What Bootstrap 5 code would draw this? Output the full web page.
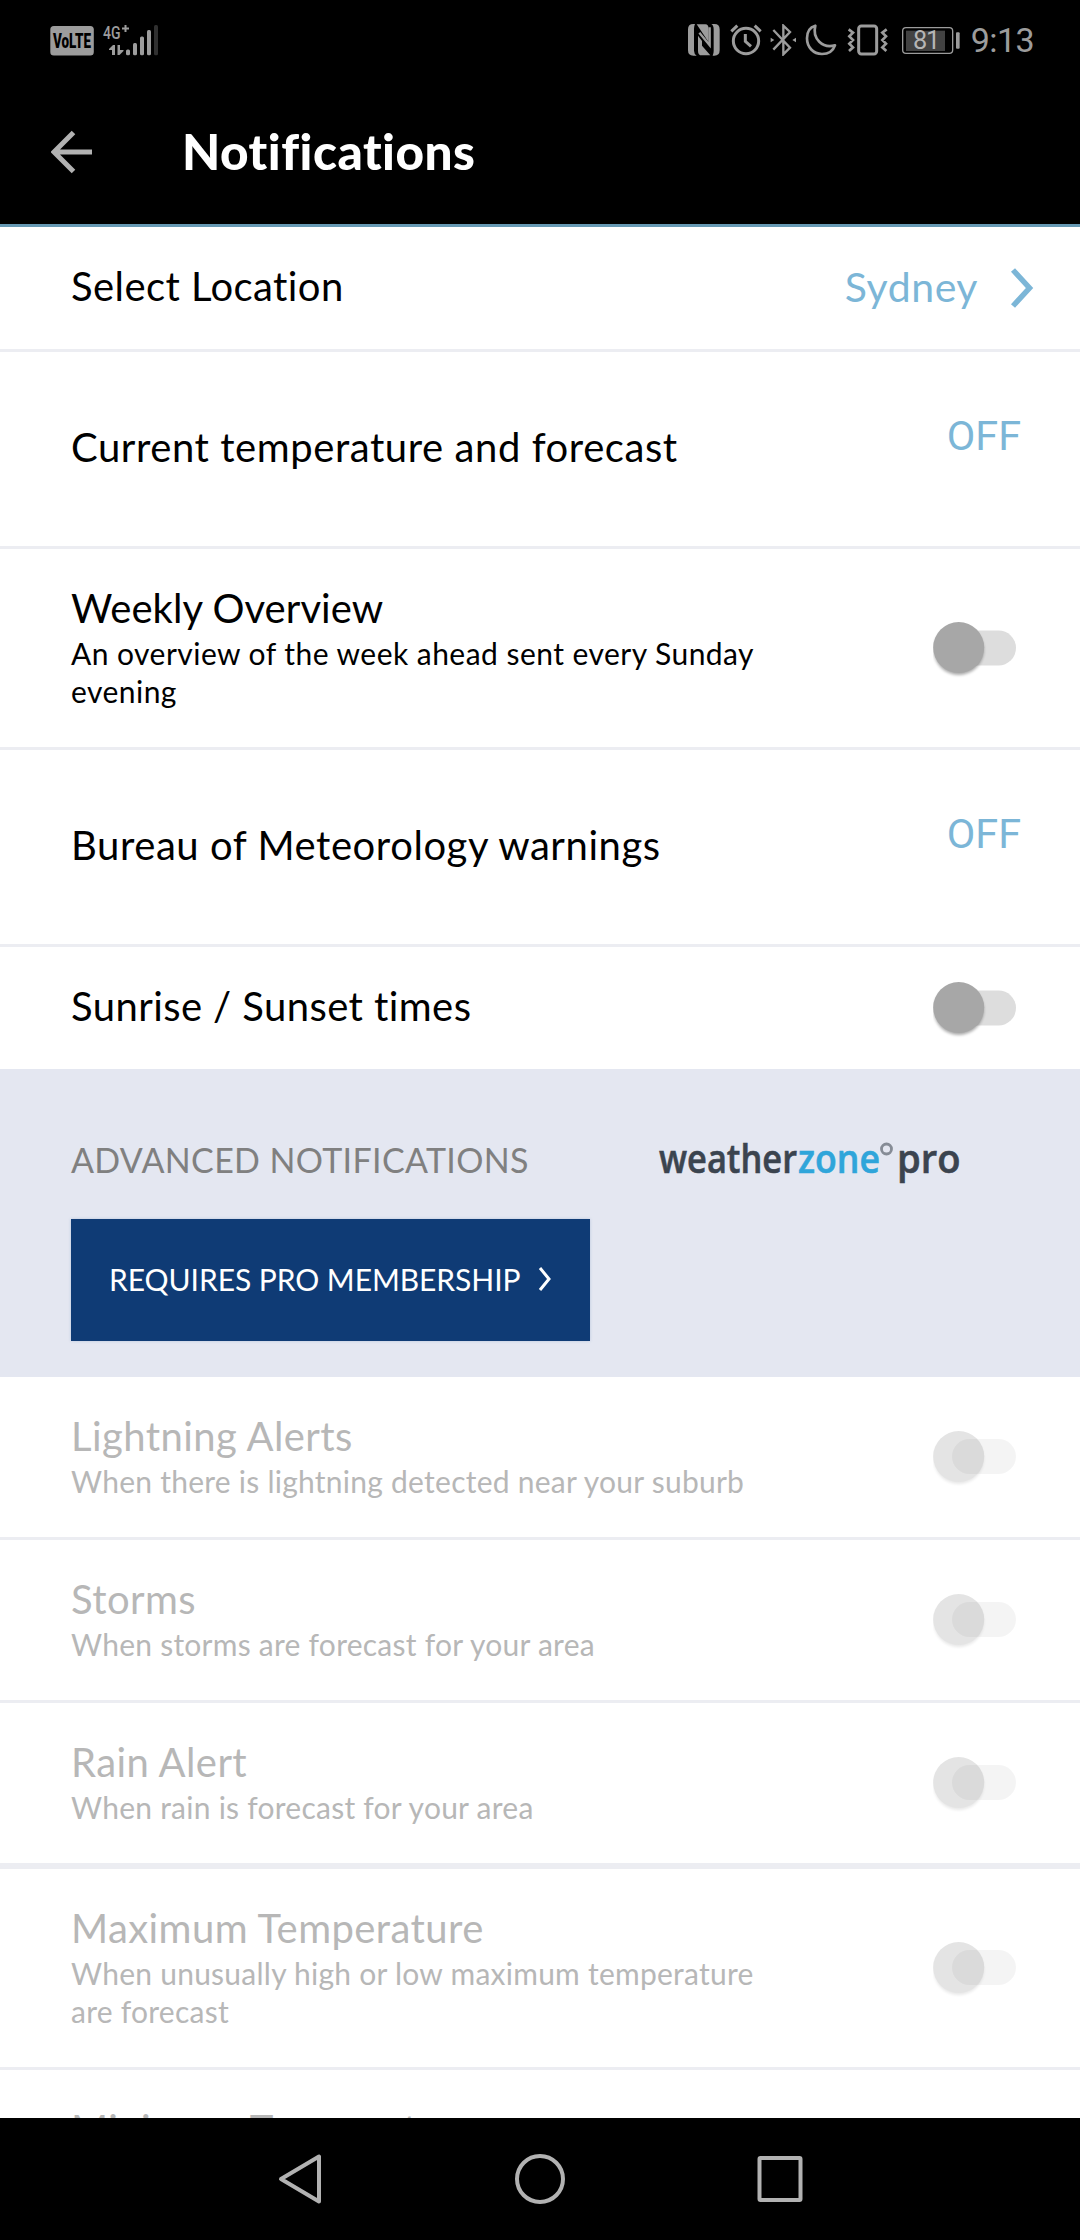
<!DOCTYPE html>
<html lang="en">
<head>
<meta charset="utf-8">
<title>Notifications</title>
<meta name="viewport" content="width=device-width, initial-scale=1">
<link href="https://cdn.jsdelivr.net/npm/bootstrap@5.3.0/dist/css/bootstrap.min.css" rel="stylesheet">
<style>
body{font-family:Lato,"Open Sans",sans-serif;color:#000;background:#fff;font-variant-ligatures:none}
.screen{width:1080px;height:2240px;overflow:hidden}
.status-area{height:80px;padding:24px 46px 0 50px}
.status-area svg{display:block;flex:none}
.clock{font:34px/32px Roboto,sans-serif;color:#9c9c9c;margin-left:10px;letter-spacing:-.6px}
.app-head{height:147px;border-bottom:3px solid #6699b3;padding:0 50px 0 51px}
.app-head h1{font-size:49.5px;line-height:60px;font-weight:900;margin:0 0 2px 87px;letter-spacing:.5px}
.content-area{height:1891px;overflow:hidden}
.item{border-bottom:3px solid #ecedf2;padding:0 63px 0 71px;height:125px}
.tall{height:197px}
.duo{height:163px}
.trio{height:201px}
.item.last-std{border:0;height:122px}
.item.thick{border-bottom-width:6px;height:166px}
.ttl{font-size:40px;line-height:47px;white-space:nowrap;letter-spacing:.42px}
.ttl-wide{letter-spacing:.57px}
.ttl-snug{letter-spacing:.06px}
.solo{padding-bottom:3px}
.copy{padding-bottom:2px}
.sub{font-size:30px;line-height:38px;margin-top:2px;white-space:nowrap;letter-spacing:.25px}
.sub-std{letter-spacing:.46px}
.place{margin-right:-21px}
.val{color:#7cb6d7;font-size:41px;line-height:47px;letter-spacing:.55px}
.off-val{font:41.5px/48px Roboto,sans-serif;color:#7cb6d7;margin:0 -4px 27px 0;letter-spacing:-.1px}
.toggle-sw{width:84px;height:60px;flex:none;display:block;overflow:visible}
.dim{color:#b7b7b7}
.promo{height:308px;background:#e4e7f1;padding:66px 71px 0}
.promo-title{font-size:34px;line-height:50px;color:#808080;white-space:nowrap;letter-spacing:.35px}
.promo-btn{width:519px;height:122px;margin-top:34px;background:#0f3b75;border-radius:0;border:0;color:#fff;font-size:30px;padding:0 38px 2px 38px;box-shadow:0 0 3px #b9c6de;white-space:nowrap;letter-spacing:-.05px}
.promo-btn:hover{background:#0f3b75;color:#fff}
.wz{margin-right:48px;font:700 40px "Open Sans",sans-serif}
.soft-keys{height:122px}
</style>
<script src="https://cdn.jsdelivr.net/npm/bootstrap@5.3.0/dist/js/bootstrap.bundle.min.js"></script>
</head>
<body>
<svg width="0" height="0" class="position-absolute">
  <defs>
    <filter id="sh" x="-30%" y="-30%" width="160%" height="170%"><feGaussianBlur stdDeviation="1.6"/></filter>
    <symbol id="sw-on" viewBox="0 0 84 60"><rect x="20" y="12.5" width="63" height="35" rx="17.5" fill="#ddd"/><circle cx="25.700" cy="32" r="25" fill="#000" opacity=".33" filter="url(#sh)"/><circle cx="25.700" cy="29.500" r="25.500" fill="#a7a7a7"/></symbol>
    <symbol id="sw-dis" viewBox="0 0 84 60"><circle cx="25.700" cy="32" r="25" fill="#000" opacity=".09" filter="url(#sh)"/><circle cx="25.700" cy="29.500" r="25.500" fill="#e4e4e4"/><rect x="19" y="12" width="64" height="35" rx="17.500" fill="#000" opacity=".045"/></symbol>
  </defs>
</svg>
<main class="screen d-flex flex-column">
  <div class="status-area bg-black d-flex justify-content-between align-items-start">
    <svg width="110" height="32" viewBox="50 24 110 32" fill="#9c9c9c">
      <rect x="50.300" y="26" width="43.500" height="29.500" rx="3.500"/>
      <text x="53" y="47.500" font-family="Roboto" font-weight="900" font-size="20" fill="#000" textLength="38" lengthAdjust="spacingAndGlyphs">VoLTE</text>
      <text x="103" y="38.500" font-family="Roboto" font-weight="500" font-size="19" textLength="17.500" lengthAdjust="spacingAndGlyphs">4G</text>
      <path d="M125.500 25v7M122 28.500h7" stroke="#9c9c9c" stroke-width="2"/>
      <path d="M115 45v10h-3v-5h-3v-1l4-4zM117.500 45h2.500v5h3.500v1l-4 4h-2z"/>
      <rect x="126" y="49.500" width="4" height="5.700" rx="1.500"/><rect x="133" y="43" width="4" height="12.200" rx="1.500"/><rect x="140" y="36.500" width="4" height="18.700" rx="1.500"/><rect x="147" y="30" width="4" height="25.200" rx="1.500"/><rect x="154" y="25" width="4" height="30.200" rx="1.500" fill="#303030"/>
    </svg>
    <div class="d-flex align-items-start">
      <svg width="273" height="32" viewBox="84 72 819 96" fill="none" stroke="#9c9c9c" stroke-width="9">
        <path fill="#9c9c9c" stroke="none" d="M100 72h5q-3 6-3 14v66q0 9 8 15h-10q-16 0-16-16V88q0-16 16-16zM110 73h26q10 0 10 14v40zM114 107l12 16v14l25 29h-26q-11 0-11-14zM154 72h9q16 0 16 16v63q0 16-16 16h-5q3-6 3-14V88q0-12-7-16z"/>
        <path stroke-width="7" d="M118 98l31 38V82"/>
        <circle cx="258" cy="123" r="38"/><path d="M256 102v22l17 15M214 94l18-17M302 94l-18-17"/>
        <path stroke-width="7" d="M340 90l50 53-20 20V77l20 19-50 53"/><path fill="#9c9c9c" stroke="none" d="M332 113l11 7-11 7zM408 113l-11 7 11 7z"/>
        <path stroke-width="8" stroke-linejoin="round" d="M466 77C444 83 441 99 441 115C441 142 460 162 486 162C505 162 519 153 525 136C488 147 456 116 466 77Z"/>
        <rect x="596" y="78" width="54" height="84" rx="8"/><path stroke-width="8" d="M566 88l13 10-11 11 11 11-11 11 11 11-12 11M680 88l-13 10 11 11-11 11 11 11-11 11 12 11"/>
        <rect x="728" y="83" width="150" height="77" rx="10" stroke-width="4"/><rect x="738" y="92" width="117" height="61" fill="#424242" stroke="none"/><rect x="888" y="97" width="11" height="49" rx="3" fill="#9c9c9c" stroke="none"/>
        <text x="759" y="147" font-family="Roboto" font-size="76" fill="#b5b5b5" stroke="none" textLength="82">81</text>
      </svg>
      <span class="clock">9:13</span>
    </div>
  </div>
  <header class="app-head bg-black text-white d-flex align-items-center">
    <svg width="44" height="44" viewBox="0 0 44 44" fill="none" stroke="#b2b2b2" stroke-width="5"><path d="M41 22H4M22.500 2.500L3 22L22.500 41.500"/></svg>
    <h1>Notifications</h1>
  </header>
  <div class="content-area">
    <div class="item d-flex align-items-center justify-content-between"><span class="ttl solo">Select Location</span>
      <span class="place d-flex align-items-center"><span class="val solo">Sydney</span><svg class="ms-4" width="36" height="42" viewBox="0 0 36 42" fill="none" stroke="#7cb6d7" stroke-width="5.500"><path d="M11 3l16.500 18L11 39"/></svg></span></div>
    <div class="item tall d-flex align-items-center justify-content-between"><span class="ttl ttl-wide solo">Current temperature and forecast</span><span class="off-val">OFF</span></div>
    <div class="item trio d-flex align-items-center justify-content-between"><div class="copy"><div class="ttl ttl-snug">Weekly Overview</div><div class="sub sub-std">An overview of the week ahead sent every Sunday<br>evening</div></div><svg class="toggle-sw"><use href="#sw-on"/></svg></div>
    <div class="item tall d-flex align-items-center justify-content-between"><span class="ttl ttl-wide solo">Bureau of Meteorology warnings</span><span class="off-val">OFF</span></div>
    <div class="item last-std d-flex align-items-center justify-content-between"><span class="ttl solo">Sunrise / Sunset times</span><svg class="toggle-sw"><use href="#sw-on"/></svg></div>
    <section class="promo">
      <div class="d-flex justify-content-between"><span class="promo-title">ADVANCED NOTIFICATIONS</span>
        <svg class="wz" width="303" height="50" viewBox="658 1135 303 50" fill="#3b444f">
          <text x="659" y="1172.700" font-weight="600" stroke="#3b444f" stroke-width=".6" textLength="138" lengthAdjust="spacingAndGlyphs">weather</text>
          <text x="798" y="1172.700" font-weight="600" fill="#2fa5da" stroke="#2fa5da" stroke-width=".6" textLength="82" lengthAdjust="spacingAndGlyphs">zone</text>
          <circle cx="886.500" cy="1149" r="5" fill="none" stroke="#868c96" stroke-width="2.800"/>
          <text x="897" y="1172.700" font-weight="600" stroke="#3b444f" stroke-width=".6" textLength="63.500" lengthAdjust="spacingAndGlyphs">pro</text>
        </svg></div>
      <button class="promo-btn btn d-flex align-items-center justify-content-between"><span>REQUIRES PRO MEMBERSHIP</span><svg width="14" height="26" viewBox="0 0 14 26" fill="none" stroke="#fff" stroke-width="3"><path d="M2 2l9 11-9 11"/></svg></button>
    </section>
    <div class="dim">
      <div class="item duo d-flex align-items-center justify-content-between"><div class="copy"><div class="ttl">Lightning Alerts</div><div class="sub">When there is lightning detected near your suburb</div></div><svg class="toggle-sw"><use href="#sw-dis"/></svg></div>
      <div class="item duo d-flex align-items-center justify-content-between"><div class="copy"><div class="ttl">Storms</div><div class="sub">When storms are forecast for your area</div></div><svg class="toggle-sw"><use href="#sw-dis"/></svg></div>
      <div class="item duo thick d-flex align-items-center justify-content-between"><div class="copy"><div class="ttl">Rain Alert</div><div class="sub">When rain is forecast for your area</div></div><svg class="toggle-sw"><use href="#sw-dis"/></svg></div>
      <div class="item trio d-flex align-items-center justify-content-between"><div class="copy"><div class="ttl">Maximum Temperature</div><div class="sub">When unusually high or low maximum temperature<br>are forecast</div></div><svg class="toggle-sw"><use href="#sw-dis"/></svg></div>
      <div class="item trio d-flex align-items-center justify-content-between"><div class="copy"><div class="ttl">Minimum Temperature</div><div class="sub">&nbsp;<br>&nbsp;</div></div></div>
    </div>
  </div>
  <nav class="soft-keys bg-black d-flex justify-content-center align-items-center">
    <svg width="526" height="54" viewBox="277 2152 526 54" fill="none" stroke="#b2b2b2" stroke-width="4" stroke-linejoin="round"><path d="M319 2156.500v45L281 2179z"/><circle cx="540" cy="2179" r="23"/><rect x="759.500" y="2158" width="41" height="42" rx="1"/></svg>
  </nav>
</main>
</body>
</html>
